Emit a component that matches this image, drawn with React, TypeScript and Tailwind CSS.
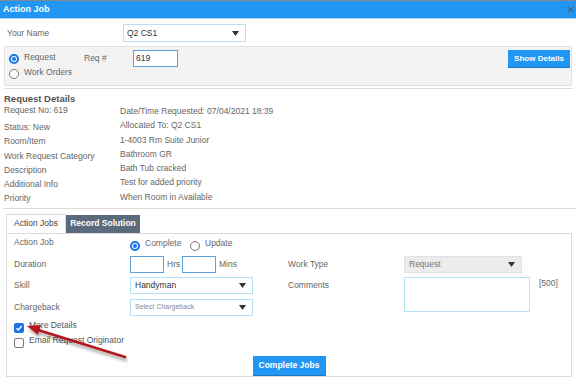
import React from 'react';

const Caret = () => (
  <svg width="7" height="5" viewBox="0 0 7 5" className="shrink-0">
    <path d="M0 0h7L3.5 5z" fill="#333" />
  </svg>
);

const Radio = ({ checked }: { checked?: boolean }) =>
  checked ? (
    <span className="w-[10px] h-[10px] rounded-full bg-[#1a73e8] flex items-center justify-center shrink-0">
      <span className="w-[6px] h-[6px] rounded-full bg-white flex items-center justify-center">
        <span className="w-[4px] h-[4px] rounded-full bg-[#1a73e8]" />
      </span>
    </span>
  ) : (
    <span className="w-[10px] h-[10px] rounded-full border border-[#777] bg-white shrink-0" />
  );

const Check = ({ checked }: { checked?: boolean }) =>
  checked ? (
    <span className="w-[10px] h-[10px] rounded-[2px] bg-[#1a73e8] flex items-center justify-center shrink-0">
      <svg width="8" height="8" viewBox="0 0 8 8">
        <path d="M1.5 4.2l1.8 1.8L6.6 2" stroke="#fff" strokeWidth="1.4" fill="none" />
      </svg>
    </span>
  ) : (
    <span className="w-[10px] h-[10px] rounded-[2px] border border-[#777] bg-white shrink-0" />
  );

const details: [string, string][] = [
  ['Status: New', 'Allocated To: Q2 CS1'],
  ['Room/Item', '1-4003 Rm Suite Junior'],
  ['Work Request Category', 'Bathroom GR'],
  ['Description', 'Bath Tub cracked'],
  ['Additional Info', 'Test for added priority'],
  ['Priority', 'When Room in Available'],
];

export default function App() {
  return (
    <div className="w-[576px] h-[385px] bg-white overflow-hidden relative font-['Liberation_Sans',Arial,sans-serif] text-[8.5px] text-[#666]">
      <div className="h-px bg-[#7d8a95]" />
      <div className="h-[18px] bg-[#2196f3] border-b border-[#a8d5f7] flex items-center justify-between pl-[3px] pr-[2px]">
        <span className="text-white font-bold text-[9px]">Action Job</span>
        <svg width="7" height="7" viewBox="0 0 7 7">
          <path d="M0.5 0.5l6 6M6.5 0.5l-6 6" stroke="#4d6275" strokeWidth="1.1" />
        </svg>
      </div>

      <div className="mt-[5px] h-[18px] flex items-center pl-[7px]">
        <span className="w-[116px]">Your Name</span>
        <div className="w-[123px] h-[18px] border border-[#b5e0f8] flex items-center justify-between pl-[3px] pr-[6px] text-[#333]">
          <span>Q2 CS1</span>
          <Caret />
        </div>
      </div>

      <div className="mt-[4px] mx-[4px] h-[40px] border border-[#e2e2e2] bg-[#f3f3f3] flex items-start pl-[4px] pr-[1px]">
        <div className="w-[75px] flex flex-col pt-[6px] gap-[4px]">
          <div className="flex items-center gap-[5px] h-[11px]">
            <Radio checked />
            <span className="-mt-[3px]">Request</span>
          </div>
          <div className="flex items-center gap-[5px] h-[11px]">
            <Radio />
            <span className="-mt-[3px]">Work Orders</span>
          </div>
        </div>
        <span className="w-[49px] pt-[5px]">Req #</span>
        <div className="mt-[3px] w-[45px] h-[17px] border border-[#5f9fdc] bg-white flex items-center pl-[2px] text-[#333]">
          619
        </div>
        <div className="flex-1" />
        <button className="mt-[3px] w-[62px] h-[18px] bg-[#2196f3] text-white font-bold text-[8px] border-b border-[#1a7ac6]">
          Show Details
        </button>
      </div>
      <div className="mt-[2px] ml-[4px] mr-[3px] h-px bg-[#dcdcdc]" />

      <div className="px-[4px] pt-[4px]">
        <div className="text-[9.5px] font-bold text-[#555] leading-[11px]">Request Details</div>
        <div className="flex">
          <div className="w-[116px] flex flex-col">
            <div className="leading-[12px]">Request No: 619</div>
            <div className="mt-[4px] flex flex-col">
              {details.map(([l]) => (
                <div key={l} className="leading-[14.3px]">{l}</div>
              ))}
            </div>
          </div>
          <div className="flex flex-col">
            <div className="leading-[14.3px]">Date/Time Requested: 07/04/2021 18:39</div>
            {details.map(([, v]) => (
              <div key={v} className="leading-[14.3px]">{v}</div>
            ))}
          </div>
        </div>
      </div>
      <div className="mt-[2px] ml-[3px] h-px bg-[#dcdcdc]" />

      <div className="mt-[5px] ml-[6px] w-[566px]">
        <div className="flex h-[19px] items-stretch">
          <div className="w-[60px] border border-b-0 border-[#dcdcdc] bg-white flex items-center justify-center text-[#444]">
            Action Jobs
          </div>
          <div className="mt-px w-[74px] bg-[#5b6b7c] flex items-center justify-center text-white font-bold">
            Record Solution
          </div>
        </div>
        <div className="h-[144px] border border-[#dcdcdc] pl-[7px] flex flex-col">
          <div className="flex">
            <div className="w-[274px] flex flex-col">
              <div className="flex h-[21px]">
                <span className="w-[116px] pt-[2px]">Action Job</span>
                <div className="flex items-center gap-[5px] pt-[4px] h-[21px]">
                  <Radio checked />
                  <span className="-mt-[5px] w-[40px]">Complete</span>
                  <Radio />
                  <span className="-mt-[5px]">Update</span>
                </div>
              </div>
              <div className="flex items-center h-[17px] mt-[1px]">
                <span className="w-[116px]">Duration</span>
                <div className="w-[34px] h-[17px] border border-[#5f9fdc]" />
                <span className="w-[18px] pl-[3px]">Hrs</span>
                <div className="w-[34px] h-[17px] border border-[#5f9fdc]" />
                <span className="pl-[3px]">Mins</span>
              </div>
              <div className="flex items-center h-[17px] mt-[4px]">
                <span className="w-[116px]">Skill</span>
                <div className="w-[123px] h-[17px] border border-[#b5e0f8] flex items-center justify-between pl-[4px] pr-[6px] text-[#333]">
                  <span>Handyman</span>
                  <Caret />
                </div>
              </div>
              <div className="flex items-center h-[17px] mt-[5px]">
                <span className="w-[116px]">Chargeback</span>
                <div className="w-[123px] h-[17px] border border-[#b5e0f8] flex items-center justify-between pl-[4px] pr-[6px]">
                  <span className="text-[7px] text-[#8a8a8a]">Select Chargeback</span>
                  <Caret />
                </div>
              </div>
            </div>
            <div className="flex flex-col pt-[21px]">
              <div className="flex items-center h-[17px] mt-[1px]">
                <span className="w-[116px]">Work Type</span>
                <div className="w-[118px] h-[17px] bg-[#ececec] border border-[#e2e2e2] flex items-center justify-between pl-[4px] pr-[6px] text-[#777]">
                  <span>Request</span>
                  <Caret />
                </div>
              </div>
              <div className="flex items-start mt-[4px]">
                <span className="w-[116px] pt-[2px]">Comments</span>
                <div className="w-[126px] h-[35px] border border-[#b5e0f8]" />
                <span className="pl-[9px]">[500]</span>
              </div>
            </div>
          </div>
          <div className="mt-[7px] flex flex-col gap-[5px] text-[#555]">
            <div className="flex items-center gap-[5px] h-[10px]">
              <Check checked />
              <span className="-mt-[4px]">More Details</span>
            </div>
            <div className="flex items-center gap-[5px] h-[10px]">
              <Check />
              <span className="-mt-[4px]">Email Request Originator</span>
            </div>
          </div>
          <div className="flex justify-center pr-[7px] mt-[8px]">
            <button className="w-[73px] h-[20px] bg-[#2196f3] text-white font-bold border-b border-[#1a7ac6]">
              Complete Jobs
            </button>
          </div>
        </div>
      </div>

      <svg className="absolute left-0 top-0 pointer-events-none" width="576" height="385">
        <defs>
          <filter id="sh" x="-20%" y="-20%" width="140%" height="160%">
            <feDropShadow dx="1" dy="3" stdDeviation="1.5" floodColor="#000" floodOpacity="0.35" />
          </filter>
        </defs>
        <g filter="url(#sh)">
          <line x1="125" y1="357" x2="38" y2="330" stroke="#b5161c" strokeWidth="2.8" strokeLinecap="round" />
          <path d="M27 326L41 325.1L37.9 334.7z" fill="#b5161c" />
        </g>
      </svg>
    </div>
  );
}
